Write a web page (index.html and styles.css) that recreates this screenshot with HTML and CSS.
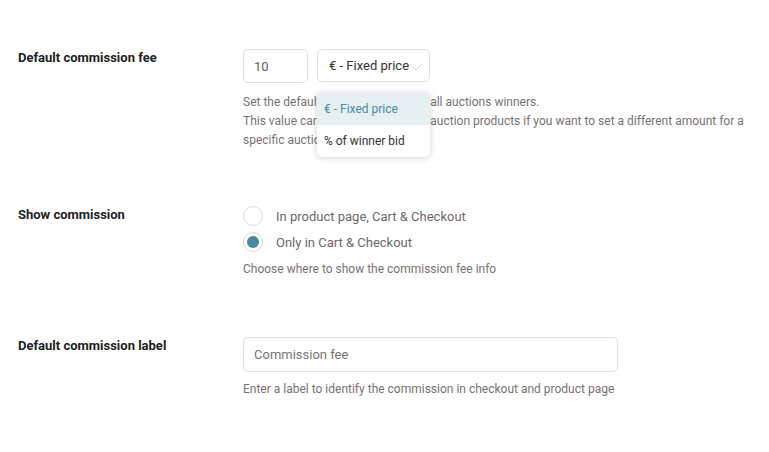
FILE: index.html
```html
<!DOCTYPE html>
<html lang="en">
<head>
<meta charset="utf-8">
<title>Commission settings</title>
<link rel="stylesheet" href="styles.css">
</head>
<body>
<div class="settings">
  <div class="row row-fee">
    <div class="label">Default commission fee</div>
    <div class="field">
      <div class="inline">
        <div class="input num">10</div>
        <div class="select-wrap">
          <div class="input select">
            <span>€ - Fixed price</span>
            <svg class="chev" width="14" height="8" viewBox="0 0 14 8"><path d="M1 1 L7 7 L13 1" fill="none" stroke="#d4d4d4" stroke-width="1"/></svg>
          </div>
          <div class="dropdown">
            <div class="opt active">€ - Fixed price</div>
            <div class="opt">% of winner bid</div>
          </div>
        </div>
      </div>
      <p class="help">Set the default commission fee for all auctions winners.<br>This value can be overridden in the auction products if you want to set a different amount for a<br>specific auction.</p>
    </div>
  </div>

  <div class="row row-show">
    <div class="label">Show commission</div>
    <div class="field">
      <div class="radios">
        <div class="radio-opt"><span class="radio"></span><span class="rtext">In product page, Cart &amp; Checkout</span></div>
        <div class="radio-opt"><span class="radio checked"></span><span class="rtext">Only in Cart &amp; Checkout</span></div>
      </div>
      <p class="help">Choose where to show the commission fee info</p>
    </div>
  </div>

  <div class="row row-label">
    <div class="label">Default commission label</div>
    <div class="field">
      <div class="input text placeholder">Commission fee</div>
      <p class="help">Enter a label to identify the commission in checkout and product page</p>
    </div>
  </div>
</div>
</body>
</html>
```

FILE: styles.css
```css
html, body {
  margin: 0;
  padding: 0;
  background: #ffffff;
}
body {
  font-family: Roboto, "Noto Sans", sans-serif;
  color: #333;
  width: 769px;
  height: 452px;
  overflow: hidden;
}
.settings {
  padding-top: 49px;
}
.row {
  display: grid;
  grid-template-columns: 225px 1fr;
  padding-left: 18px;
}
.row-fee { margin-bottom: 56px; }
.row-show { margin-bottom: 58px; }
.label {
  font-size: 13px;
  font-weight: 700;
  line-height: 17px;
  color: #222;
}
.field { min-width: 0; }
.inline {
  display: flex;
  gap: 9px;
  align-items: flex-start;
}
.input {
  box-sizing: border-box;
  border: 1px solid #dedede;
  border-radius: 5px;
  background: #fff;
  font-size: 13px;
  display: flex;
  align-items: center;
  padding: 0 10px;
}
.num {
  width: 65px;
  height: 34px;
  color: #5e5e5e;
}
.select-wrap { position: relative; }
.select {
  width: 113px;
  height: 33px;
  color: #333;
  padding: 0 0 0 11px;
  white-space: nowrap;
}
.chev {
  flex: none;
  margin-left: 0;
  margin-top: 2px;
}
.dropdown {
  position: absolute;
  left: 0;
  top: 43px;
  width: 113px;
  background: #fff;
  border-radius: 5px;
  box-shadow: 0 1px 6px rgba(0,0,0,0.18);
  overflow: hidden;
  z-index: 2;
}
.opt {
  height: 32px;
  display: flex;
  align-items: center;
  padding-left: 7px;
  font-size: 12px;
  color: #333;
}
.opt.active {
  height: 33px;
  background: #e6eff2;
  color: #4a8aa6;
}
.help {
  margin: 10px 0 0;
  font-size: 12px;
  line-height: 19px;
  color: #7b7173;
  white-space: nowrap;
}
.radios {
  display: flex;
  flex-direction: column;
  gap: 6px;
}
.radio-opt {
  display: flex;
  align-items: center;
  height: 20px;
}
.radio {
  box-sizing: border-box;
  width: 20px;
  height: 20px;
  border: 1px solid #dcdcdc;
  border-radius: 50%;
  margin-right: 13px;
  display: flex;
  align-items: center;
  justify-content: center;
}
.radio.checked::after {
  content: "";
  width: 12px;
  height: 12px;
  border-radius: 50%;
  background: #4b88a2;
}
.rtext {
  font-size: 13px;
  color: #6f6769;
}
.row-show .help { margin-top: 8px; }
.text {
  width: 375px;
  height: 35px;
}
.placeholder { color: #7a7173; }
.row-label .help { margin-top: 8px; }
```
